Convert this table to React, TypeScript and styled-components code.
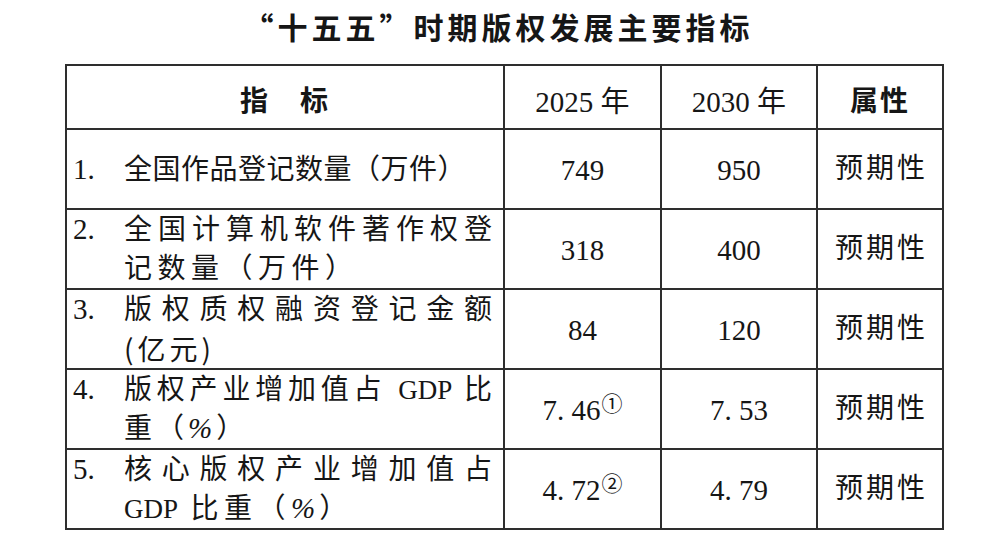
import React from 'react';
import styled, { createGlobalStyle } from 'styled-components';

const GlobalStyle = createGlobalStyle`
  html, body {
    margin: 0;
    background: #ffffff;
  }
`;

const Page = styled.div`
  width: 987px;
  height: 552px;
  box-sizing: border-box;
  padding: 8px 0 0 65px;
  overflow: hidden;
  color: #161616;
  font-family: "Liberation Serif", "Noto Sans CJK SC", serif;
`;

const Title = styled.h1`
  margin: 0 0 20px;
  width: 877px;
  padding-right: 10px;
  box-sizing: border-box;
  text-align: center;
  font-family: "Noto Sans CJK SC", sans-serif;
  font-weight: 700;
  font-size: 30px;
  line-height: 36px;
  letter-spacing: 4px;
`;

const Table = styled.table`
  border-collapse: collapse;
  table-layout: fixed;
  width: 877px;
  border: 2px solid #2e2e2e;
`;

const HeadCell = styled.th<{ $bold?: boolean }>`
  height: 58px;
  padding: 4px 0 0;
  border: 2px solid #2e2e2e;
  text-align: center;
  vertical-align: middle;
  font-family: ${(p) =>
    p.$bold ? '"Noto Sans CJK SC", sans-serif' : '"Liberation Serif", "Noto Sans CJK SC", serif'};
  font-weight: ${(p) => (p.$bold ? 700 : 400)};
  font-size: ${(p) => (p.$bold ? '28px' : '29px')};
  letter-spacing: ${(p) => (p.$bold ? '2px' : '0')};
`;

const Cell = styled.td`
  height: 78px;
  padding: 0;
  border: 2px solid #2e2e2e;
  vertical-align: middle;
`;

const IndexCell = styled(Cell)`
  padding: 0 11px 0 6px;
`;

const IndexWrap = styled.div`
  display: flex;
  align-items: flex-start;
`;

const Num = styled.div`
  flex: 0 0 51px;
  font-size: 29px;
  line-height: 39px;
`;

const Body = styled.div`
  flex: 1;
  min-width: 0;
`;

const Line = styled.div<{ $justify?: boolean; $spread?: number; $cjk?: boolean }>`
  height: 39px;
  font-size: 28px;
  line-height: 39px;
  text-align: ${(p) => (p.$justify ? 'justify' : 'left')};
  text-align-last: ${(p) => (p.$justify ? 'justify' : 'auto')};
  letter-spacing: ${(p) => p.$spread ?? 0}px;
  ${(p) => p.$cjk && 'font-family: "Noto Sans CJK SC", sans-serif;'}
`;

const Latin = styled.span`
  font-size: 27px;
  letter-spacing: 0;
`;

const Percent = styled.span`
  font-size: 29px;
  line-height: 1;
  font-style: italic;
  letter-spacing: 4px;
`;

const ValueCell = styled(Cell)`
  height: 76px;
  padding-top: 2px;
  text-align: center;
  font-size: 29px;
  line-height: 36px;
`;

const Mark = styled.sup`
  font-family: "Noto Sans CJK SC", sans-serif;
  font-size: 21px;
  line-height: 0;
  vertical-align: 9px;
  margin-left: 1px;
`;

const AttrCell = styled(Cell)`
  text-align: center;
  font-size: 28px;
  line-height: 36px;
  letter-spacing: 3px;
  padding-left: 3px;
`;

type Row = {
  num: string;
  lines: { text: React.ReactNode; justify?: boolean; spread?: number; cjk?: boolean }[];
  y2025: React.ReactNode;
  y2030: string;
};

const rows: Row[] = [
  {
    num: '1.',
    lines: [{ text: '全国作品登记数量（万件）', spread: 0.5 }],
    y2025: '749',
    y2030: '950',
  },
  {
    num: '2.',
    lines: [
      { text: '全国计算机软件著作权登', justify: true },
      { text: '记数量（万件）', spread: 5.5 },
    ],
    y2025: '318',
    y2030: '400',
  },
  {
    num: '3.',
    lines: [
      { text: '版权质权融资登记金额', justify: true },
      { text: '(亿元)', spread: 4, cjk: true },
    ],
    y2025: '84',
    y2030: '120',
  },
  {
    num: '4.',
    lines: [
      {
        text: (
          <>
            版权产业增加值占 <Latin>GDP</Latin> 比
          </>
        ),
        justify: true,
      },
      {
        text: (
          <>
            重（<Percent>%</Percent>）
          </>
        ),
        spread: 4,
      },
    ],
    y2025: (
      <>
        7. 46<Mark>①</Mark>
      </>
    ),
    y2030: '7. 53',
  },
  {
    num: '5.',
    lines: [
      { text: '核心版权产业增加值占', justify: true },
      {
        text: (
          <>
            <Latin>GDP</Latin> 比重（<Percent>%</Percent>）
          </>
        ),
        spread: 5.5,
      },
    ],
    y2025: (
      <>
        4. 72<Mark>②</Mark>
      </>
    ),
    y2030: '4. 79',
  },
];

const App: React.FC = () => {
  return (
    <>
      <GlobalStyle />
      <Page>
        <Title>“十五五”时期版权发展主要指标</Title>
        <Table>
          <colgroup>
            <col style={{ width: 438 }} />
            <col style={{ width: 157 }} />
            <col style={{ width: 156 }} />
            <col style={{ width: 126 }} />
          </colgroup>
          <thead>
            <tr>
              <HeadCell $bold>指　标</HeadCell>
              <HeadCell>2025 年</HeadCell>
              <HeadCell>2030 年</HeadCell>
              <HeadCell $bold>属性</HeadCell>
            </tr>
          </thead>
          <tbody>
            {rows.map((row) => (
              <tr key={row.num}>
                <IndexCell>
                  <IndexWrap>
                    <Num>{row.num}</Num>
                    <Body>
                      {row.lines.map((line, i) => (
                        <Line
                          key={i}
                          $justify={line.justify}
                          $spread={line.spread}
                          $cjk={line.cjk}
                        >
                          {line.text}
                        </Line>
                      ))}
                    </Body>
                  </IndexWrap>
                </IndexCell>
                <ValueCell>{row.y2025}</ValueCell>
                <ValueCell>{row.y2030}</ValueCell>
                <AttrCell>预期性</AttrCell>
              </tr>
            ))}
          </tbody>
        </Table>
      </Page>
    </>
  );
};

export default App;
